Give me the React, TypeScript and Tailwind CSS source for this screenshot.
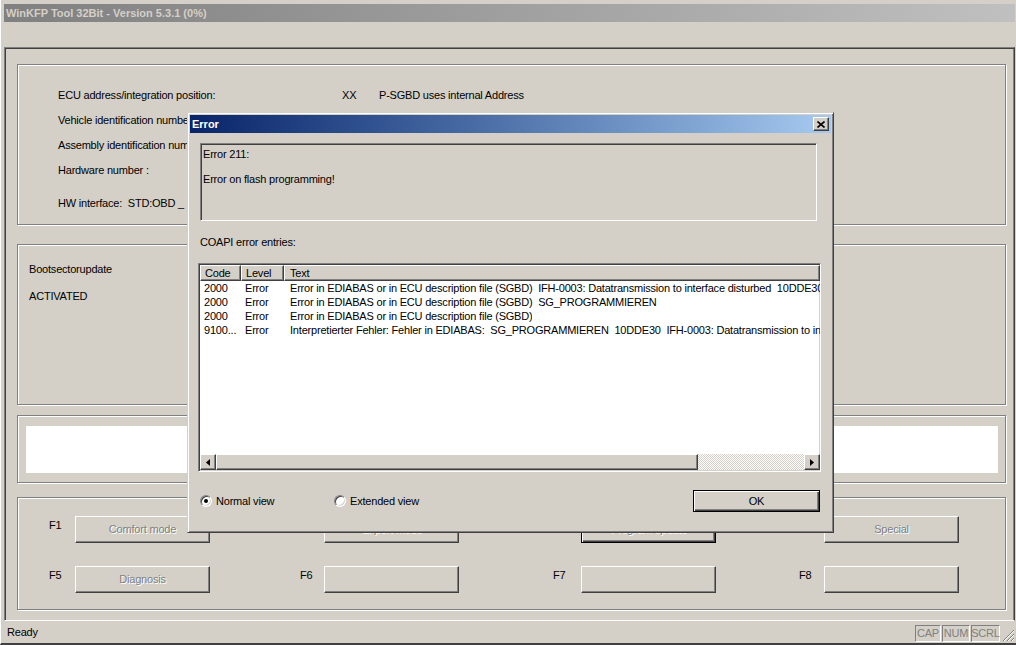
import React from 'react';

const raised =
  'border border-t-white border-l-white border-r-[#404040] border-b-[#404040] shadow-[inset_-1px_-1px_0_#808080]';
const etched = 'border border-[#808080] shadow-[inset_1px_1px_0_#fff,1px_1px_0_#fff]';
const sunken =
  'border border-t-[#808080] border-l-[#808080] border-r-white border-b-white shadow-[inset_1px_1px_0_#404040,inset_-1px_-1px_0_#d4d0c8]';
const disabledText = 'text-[#808080] [text-shadow:1px_1px_0_#fff]';

function FButton({ label, isDefault }: { label?: string; isDefault?: boolean }) {
  return (
    <div
      className={`w-[135px] h-[27px] flex items-center justify-center ${disabledText} ${
        isDefault
          ? 'border border-black shadow-[inset_1px_1px_0_#fff,inset_-1px_-1px_0_#404040,inset_-2px_-2px_0_#808080]'
          : raised
      }`}
    >
      {label}
    </div>
  );
}

function FCell({ fkey, label, labelW, isDefault, className }: { fkey: string; label?: string; labelW: string; isDefault?: boolean; className?: string }) {
  return (
    <div className={`flex ${className ?? ''}`}>
      <div className={`${labelW} pt-[3px]`}>{fkey}</div>
      <FButton label={label} isDefault={isDefault} />
    </div>
  );
}

const rows = [
  ['2000', 'Error', 'Error in EDIABAS or in ECU description file (SGBD)  IFH-0003: Datatransmission to interface disturbed  10DDE30'],
  ['2000', 'Error', 'Error in EDIABAS or in ECU description file (SGBD)  SG_PROGRAMMIEREN'],
  ['2000', 'Error', 'Error in EDIABAS or in ECU description file (SGBD)'],
  ['9100...', 'Error', 'Interpretierter Fehler: Fehler in EDIABAS:  SG_PROGRAMMIEREN  10DDE30  IFH-0003: Datatransmission to interface disturbed'],
];

function Radio({ checked, label }: { checked?: boolean; label: string }) {
  return (
    <div className="flex items-center gap-[4px]">
      <div className="w-[12px] h-[12px] rounded-full bg-white border border-t-[#808080] border-l-[#808080] border-r-white border-b-white shadow-[inset_1px_1px_0_#404040,inset_-1px_-1px_0_#d4d0c8] flex items-center justify-center">
        {checked && <div className="w-[4px] h-[4px] rounded-full bg-black" />}
      </div>
      <span>{label}</span>
    </div>
  );
}

function ErrorDialog() {
  return (
    <div className="absolute left-[186px] top-[112px] w-[647px] h-[421px] bg-[#d4d0c8] border border-t-[#d4d0c8] border-l-[#d4d0c8] border-r-[#404040] border-b-[#404040] shadow-[inset_1px_1px_0_#fff,inset_-1px_-1px_0_#808080] p-[2px] flex flex-col">
      {/* Title bar */}
      <div className="h-[18px] shrink-0 flex items-center justify-between pl-[2px] pr-[2px] bg-linear-to-r from-[#0a246a] to-[#a6caf0]">
        <span className="font-bold text-white tracking-[0px]">Error</span>
        <div className={`w-[16px] h-[14px] bg-[#d4d0c8] ${raised} flex items-center justify-center`}>
          <svg width="8" height="7" viewBox="0 0 8 7">
            <path d="M0.5 0.5L7.5 6.5M7.5 0.5L0.5 6.5" stroke="#000" strokeWidth="1.6" />
          </svg>
        </div>
      </div>

      {/* Message */}
      <div className={`ml-[10px] mt-[10px] w-[617px] h-[78px] shrink-0 ${sunken} pl-[2px] pt-[4px]`}>
        <div>Error 211:</div>
        <div className="mt-[12px]">Error on flash programming!</div>
      </div>

      <div className="ml-[10px] mt-[15px] h-[13px]">COAPI error entries:</div>

      {/* List view */}
      <div className={`ml-[8px] mt-[14px] w-[623px] h-[209px] shrink-0 bg-white ${sunken} flex flex-col overflow-hidden`}>
        <div className="ml-[1px] mt-[1px] h-[16px] shrink-0 flex bg-[#d4d0c8]">
          <div className={`w-[41px] pl-[4px] ${raised} flex items-center`}>Code</div>
          <div className={`w-[43px] pl-[4px] ${raised} flex items-center`}>Level</div>
          <div className={`flex-1 pl-[5px] ${raised} flex items-center`}>Text</div>
        </div>
        <div className="flex-1 ml-[1px]">
          {rows.map((r, i) => (
            <div key={i} className="h-[14px] flex items-center whitespace-pre">
              <div className="w-[41px] pl-[4px] shrink-0">{r[0]}</div>
              <div className="w-[43px] pl-[4px] shrink-0">{r[1]}</div>
              <div className="pl-[6px] overflow-hidden">{r[2]}</div>
            </div>
          ))}
        </div>
        {/* Horizontal scrollbar */}
        <div className="ml-[1px] mb-[1px] h-[16px] shrink-0 flex">
          <div className={`w-[16px] h-[16px] bg-[#d4d0c8] ${raised} flex items-center justify-center`}>
            <svg width="4" height="7" viewBox="0 0 4 7"><path d="M4 0L0 3.5L4 7Z" fill="#000" /></svg>
          </div>
          <div className={`w-[482px] h-[16px] bg-[#d4d0c8] ${raised}`} />
          <div className="flex-1 h-[16px] bg-[repeating-conic-gradient(#fff_0_25%,#d4d0c8_0_50%)] bg-[length:2px_2px]" />
          <div className={`w-[16px] h-[16px] bg-[#d4d0c8] ${raised} flex items-center justify-center`}>
            <svg width="4" height="7" viewBox="0 0 4 7"><path d="M0 0L4 3.5L0 7Z" fill="#000" /></svg>
          </div>
        </div>
      </div>

      {/* Bottom row */}
      <div className="ml-[10px] mr-[11px] mt-[18px] h-[22px] flex items-center">
        <div className="w-[134px]">
          <Radio checked label="Normal view" />
        </div>
        <Radio label="Extended view" />
        <div className="ml-auto w-[127px] h-[22px] border border-black shadow-[inset_1px_1px_0_#fff,inset_-1px_-1px_0_#404040,inset_-2px_-2px_0_#808080] flex items-center justify-center">
          OK
        </div>
      </div>
    </div>
  );
}

export default function App() {
  return (
    <div className="relative w-[1016px] h-[645px] overflow-hidden bg-[#d4d0c8] text-black font-['Liberation_Sans',Arial,sans-serif] text-[11px] leading-[13px] tracking-[-0.2px] flex flex-col pt-[4px] pl-[3px] pr-[1px] border-b-2 border-b-[#404040] border-l border-l-white">
      {/* Window title */}
      <div className="h-[18px] shrink-0 flex items-center pl-[2px] bg-linear-to-r from-[#808080] to-[#c0c0c0]">
        <span className="font-bold text-[#d4d0c8] tracking-[0px]">WinKFP Tool 32Bit - Version 5.3.1 (0%)</span>
      </div>
      <div className="h-[25px] shrink-0" />

      {/* Client area */}
      <div className="h-[574px] shrink-0 flex flex-col border border-t-[#808080] border-l-[#808080] border-r-[#404040] border-b-white shadow-[inset_1px_1px_0_#404040,inset_-1px_0_0_#808080]">
        {/* ECU info */}
        <div className={`ml-[12px] mr-[8px] mt-[16px] h-[161px] shrink-0 ${etched} pl-[40px] pt-[24px]`}>
          <div className="h-[25px] flex">
            <div className="w-[284px]">ECU address/integration position:</div>
            <div className="w-[37px]">XX</div>
            <div>P-SGBD uses internal Address</div>
          </div>
          <div className="h-[25px]">Vehicle identification number:</div>
          <div className="h-[25px]">Assembly identification number:</div>
          <div className="h-[25px]">Hardware number :</div>
          <div className="mt-[8px] whitespace-pre">HW interface:  STD:OBD _</div>
        </div>

        {/* Bootsector */}
        <div className={`ml-[12px] mr-[8px] mt-[19px] h-[161px] shrink-0 ${etched} pl-[11px] pt-[18px]`}>
          <div className="h-[27px]">Bootsectorupdate</div>
          <div>ACTIVATED</div>
        </div>

        {/* Progress */}
        <div className={`ml-[12px] mr-[8px] mt-[10px] h-[68px] shrink-0 ${etched} pl-[8px] pr-[7px] pt-[10px]`}>
          <div className="h-[47px] bg-white" />
        </div>

        {/* Function keys */}
        <div className={`ml-[12px] mr-[8px] mt-[14px] h-[113px] shrink-0 ${etched} pl-[31px] pt-[18px] flex flex-col gap-[23px]`}>
          <div className="flex">
            <FCell fkey="F1" label="Comfort mode" labelW="w-[26px]" />
            <FCell fkey="F2" label="Expert mode" labelW="w-[24px]" className="ml-[90px]" />
            <FCell fkey="F3" label="Program update" labelW="w-[28px]" isDefault className="ml-[94px]" />
            <FCell fkey="F4" label="Special" labelW="w-[25px]" className="ml-[83px]" />
          </div>
          <div className="flex">
            <FCell fkey="F5" label="Diagnosis" labelW="w-[26px]" />
            <FCell fkey="F6" labelW="w-[24px]" className="ml-[90px]" />
            <FCell fkey="F7" labelW="w-[28px]" className="ml-[94px]" />
            <FCell fkey="F8" labelW="w-[25px]" className="ml-[83px]" />
          </div>
        </div>
      </div>

      {/* Status bar */}
      <div className="h-[22px] shrink-0 flex items-center pl-[3px]">
        <span>Ready</span>
        <div className="ml-auto flex items-center gap-[1px] mt-[2px] text-[#808080]">
          <div className="h-[17px] w-[26px] flex items-center justify-center border border-t-[#808080] border-l-[#808080] border-r-white border-b-white">CAP</div>
          <div className="h-[17px] w-[28px] flex items-center justify-center border border-t-[#808080] border-l-[#808080] border-r-white border-b-white">NUM</div>
          <div className="h-[17px] w-[29px] flex items-center justify-center border border-t-[#808080] border-l-[#808080] border-r-white border-b-white">SCRL</div>
        </div>
        <svg width="13" height="13" viewBox="0 0 13 13" className="ml-[2px] mt-[6px]">
          <path d="M12 1L1 12M12 5L5 12M12 9L9 12" stroke="#808080" strokeWidth="1" />
          <path d="M12 2L2 12M12 6L6 12M12 10L10 12" stroke="#fff" strokeWidth="1" />
        </svg>
      </div>

      <ErrorDialog />
    </div>
  );
}
